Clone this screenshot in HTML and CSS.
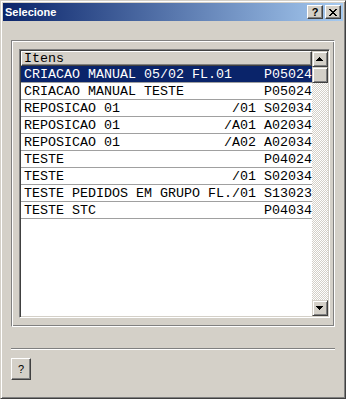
FILE: index.html
```html
<!DOCTYPE html>
<html>
  <head>
    <meta charset="utf-8">
    <title>Selecione</title>
    <link rel="stylesheet" href="styles.css">
  </head>
  <body>
    <div class="window">
      <div class="titlebar">
        <span class="title">Selecione</span>
        <span class="caption-btn help">?</span>
        <span class="caption-btn close">
          <svg width="8" height="7" viewBox="0 0 8 7"><path d="M0 0h2v1h-2z M6 0h2v1h-2z M1 1h2v1h-2z M5 1h2v1h-2z M2 2h4v1h-4z M3 3h2v1h-2z M2 4h4v1h-4z M1 5h2v1h-2z M5 5h2v1h-2z M0 6h2v1h-2z M6 6h2v1h-2z" fill="#000"/></svg>
        </span>
      </div>
      <div class="client">
        <div class="group">
          <div class="listview">
            <div class="list-main">
              <div class="header">Itens</div>
              <div class="row selected">CRIACAO MANUAL 05/02 FL.01    P05024</div>
              <div class="row">CRIACAO MANUAL TESTE          P05024</div>
              <div class="row">REPOSICAO 01              /01 S02034</div>
              <div class="row">REPOSICAO 01             /A01 A02034</div>
              <div class="row">REPOSICAO 01             /A02 A02034</div>
              <div class="row">TESTE                         P04024</div>
              <div class="row">TESTE                     /01 S02034</div>
              <div class="row">TESTE PEDIDOS EM GRUPO FL./01 S13023</div>
              <div class="row">TESTE STC                     P04034</div>
            </div>
            <div class="scrollbar">
              <div class="sb-btn">
                <svg width="7" height="4" viewBox="0 0 7 4"><path d="M3 0h1v1h-1z M2 1h3v1h-3z M1 2h5v1h-5z M0 3h7v1h-7z" fill="#000"/></svg>
              </div>
              <div class="sb-thumb"></div>
              <div class="sb-track"></div>
              <div class="sb-btn">
                <svg width="7" height="4" viewBox="0 0 7 4"><path d="M0 0h7v1h-7z M1 1h5v1h-5z M2 2h3v1h-3z M3 3h1v1h-1z" fill="#000"/></svg>
              </div>
            </div>
          </div>
        </div>
        <div class="separator"></div>
        <div class="btn">?</div>
      </div>
    </div>
  </body>
</html>
```

FILE: styles.css
```css
body {
  margin:0;
  background:#d4d0c8;
}
.window {
  width:346px;
  height:399px;
  box-sizing:border-box;
  background:#d4d0c8;
  border:1px solid;
  border-color:#d4d0c8 #404040 #404040 #d4d0c8;
  box-shadow:inset 1px 1px #fff, inset -1px -1px #808080;
  padding:2px;
  display:flex;
  flex-direction:column;
  font-family:"Liberation Sans", Arial, sans-serif;
}
.titlebar {
  height:18px;
  display:flex;
  align-items:center;
  gap:2px;
  padding:0 2px;
  background:linear-gradient(to right, #0a246a, #a6caf0);
}
.title {
  flex:1;
  color:#fff;
  font-weight:bold;
  font-size:11px;
}
.caption-btn {
  width:16px;
  height:14px;
  box-sizing:border-box;
  background:#d4d0c8;
  border:1px solid;
  border-color:#fff #404040 #404040 #fff;
  box-shadow:inset -1px -1px #808080;
  display:flex;
  align-items:center;
  justify-content:center;
  font-size:11px;
  font-weight:bold;
  color:#000;
  line-height:12px;
}
.client {
  flex:1;
  display:flex;
  flex-direction:column;
  align-items:flex-start;
  padding:19px 8px 0 8px;
}
.group {
  align-self:stretch;
  height:287px;
  box-sizing:border-box;
  border:1px solid;
  border-color:#808080 #fff #fff #808080;
  box-shadow:inset 1px 1px #fff, inset -1px -1px #808080;
  padding:8px 7px;
  display:flex;
}
.listview {
  flex:1;
  display:flex;
  border:1px solid;
  border-color:#808080 #fff #fff #808080;
  box-shadow:inset 1px 1px #404040, inset -1px -1px #d4d0c8;
  padding:1px;
}
.list-main {
  flex:1;
  min-width:0;
  background:#fff;
  overflow:hidden;
  font-family:"Liberation Mono", "Courier New", monospace;
  font-size:13.33px;
  color:#000;
}
.header {
  height:15px;
  box-sizing:border-box;
  background:#d4d0c8;
  border:1px solid;
  border-color:#fff #404040 #404040 #fff;
  box-shadow:inset -1px -1px #808080;
  padding-left:2px;
  line-height:13px;
}
.row {
  height:15px;
  padding:1px 0 0 3px;
  line-height:16px;
  border-bottom:1px solid #a0a0a0;
  white-space:pre;
  overflow:hidden;
}
.row.selected {
  background:#0a246a;
  color:#fff;
}
.scrollbar {
  width:16px;
  display:flex;
  flex-direction:column;
}
.sb-btn, .sb-thumb {
  height:16px;
  box-sizing:border-box;
  background:#d4d0c8;
  border:1px solid;
  border-color:#d4d0c8 #404040 #404040 #d4d0c8;
  box-shadow:inset 1px 1px #fff, inset -1px -1px #808080;
  display:flex;
  align-items:center;
  justify-content:center;
}
.sb-track {
  flex:1;
  background:repeating-conic-gradient(#fff 0 25%, #d4d0c8 0 50%) 0 0 / 2px 2px;
}
.separator {
  align-self:stretch;
  margin-top:21px;
  border-top:1px solid #808080;
  border-bottom:1px solid #fff;
}
.btn {
  margin-top:8px;
  width:20px;
  height:22px;
  box-sizing:border-box;
  background:#d4d0c8;
  border:1px solid;
  border-color:#fff #404040 #404040 #fff;
  box-shadow:inset -1px -1px #808080;
  display:flex;
  align-items:center;
  justify-content:center;
  font-size:11px;
  color:#000;
}
```
